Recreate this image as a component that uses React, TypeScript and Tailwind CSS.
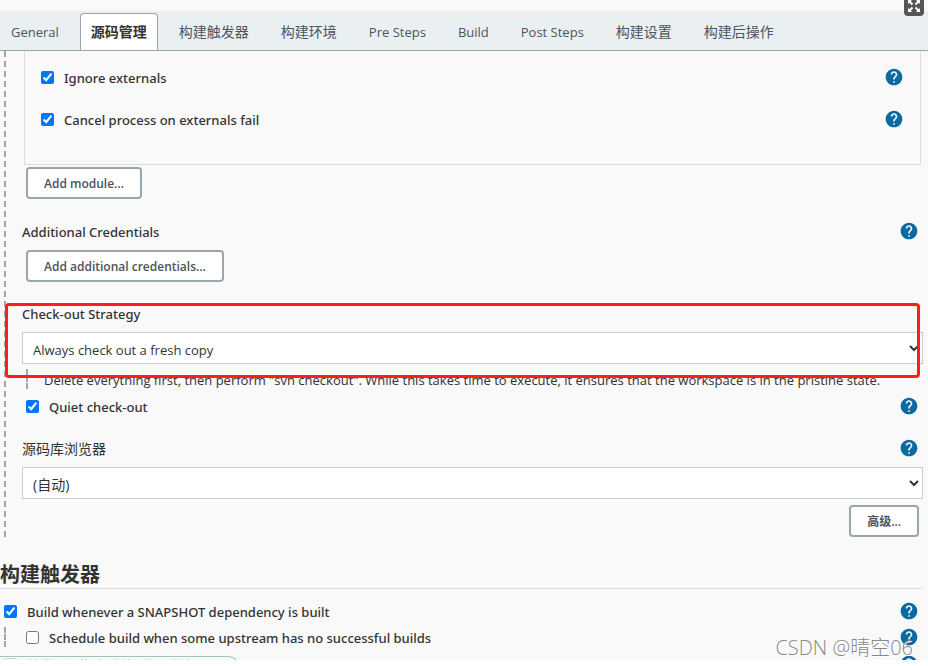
import React from 'react';
import { MdHelp } from 'react-icons/md';

const tabs = [
    { label: 'General', size: 'text-[13px]' },
    { label: '源码管理', size: 'text-[14px]' },
    { label: '构建触发器', size: 'text-[14px]' },
    { label: '构建环境', size: 'text-[14px]' },
    { label: 'Pre Steps', size: 'text-[13px]' },
    { label: 'Build', size: 'text-[13px]' },
    { label: 'Post Steps', size: 'text-[13px]' },
    { label: '构建设置', size: 'text-[14px]' },
    { label: '构建后操作', size: 'text-[14px]' },
];
const activeTab = '源码管理';

const labelFont = "font-['Noto_Sans','Noto_Sans_CJK_SC',sans-serif] font-medium";

function Help({ topic }: { topic: string }) {
    return (
        <a href="#help" aria-label={`Help: ${topic}`} className="shrink-0 text-[#0b6aa2]">
            <MdHelp size={20} />
        </a>
    );
}

function CheckRow({ id, label, checked = false, className = '' }: { id: string; label: string; checked?: boolean; className?: string }) {
    return (
        <div className={`flex h-5 items-center ${className}`}>
            <input id={id} type="checkbox" defaultChecked={checked} className="size-[13px] shrink-0" />
            <label htmlFor={id} className={`ml-[10px] grow pt-[2px] ${labelFont}`}>{label}</label>
            <Help topic={label} />
        </div>
    );
}

function Button({ children }: { children: React.ReactNode }) {
    return (
        <button type="button" className="h-8 rounded border-2 border-[#98a6ad] bg-white px-4 pt-[2px] text-[12px] font-semibold text-[#4d545d]">
            {children}
        </button>
    );
}

function Select({ id, options, size = 'text-[13px]' }: { id: string; options: string[]; size?: string }) {
    return (
        <select id={id} className={`block h-8 w-full border border-[#cccccc] bg-white pt-[3px] pl-[6px] text-[#333] ${size}`}>
            {options.map((o) => <option key={o}>{o}</option>)}
        </select>
    );
}

function ExpandButton() {
    return (
        <button type="button" aria-label="Fullscreen" className="absolute -top-1 right-1 size-5 rounded bg-[#555]">
            <svg viewBox="0 0 20 20" className="size-5" fill="#fff" stroke="#fff" strokeWidth="2">
                <path d="M5 5l3.5 3.5M15 5l-3.5 3.5M5 15l3.5-3.5M15 15l-3.5-3.5" />
                <path stroke="none" d="M4 4h4L4 8zM16 4h-4l4 4zM4 16h4l-4-4zM16 16h-4l4-4z" />
            </svg>
        </button>
    );
}

export default function App() {
    return (
        <div className="relative overflow-hidden bg-[#f9f9f9] font-['Open_Sans','Noto_Sans_CJK_SC',sans-serif] text-[13px] leading-5 text-[#333]">
            <nav className="mt-[11px] flex h-10 items-end gap-[10px] border-b border-[#98a6ad] bg-[#eaeff2] whitespace-nowrap text-[#4d545d]">
                {tabs.map((t) => (
                    <a
                        key={t.label}
                        href="#tab"
                        className={`flex h-[37px] items-center rounded-t border border-b-0 px-[10px] ${t.size} ${t.label === activeTab ? 'border-[#98a6ad] bg-white font-bold text-[#333]' : 'border-transparent'}`}
                    >
                        {t.label}
                    </a>
                ))}
            </nav>

            <section className="mt-[3px] ml-1 border-l-2 border-dashed border-[#a6a6a6] pl-4">
                <div className="mr-[7px] ml-[2px] -mt-[3px] border border-t-0 border-[#dddddd] pt-4 pr-4 pb-[35px] pl-4">
                    <CheckRow id="ignore" label="Ignore externals" checked />
                    <CheckRow id="cancel" label="Cancel process on externals fail" checked className="mt-[22px]" />
                </div>
                <div className="mt-[2px] ml-1 flex">
                    <Button>Add module...</Button>
                </div>

                <div className="mt-[22px] mr-[9px] flex h-5 justify-between">
                    <h3 className={`pt-px ${labelFont}`}>Additional Credentials</h3>
                    <Help topic="Additional Credentials" />
                </div>
                <div className="mt-[9px] ml-1 flex">
                    <Button>Add additional credentials...</Button>
                </div>

                <div className="relative mt-[22px] mr-[5px]">
                    <label htmlFor="strategy" className={`block ${labelFont}`}>Check-out Strategy</label>
                    <div className="mt-2">
                        <Select id="strategy" options={['Always check out a fresh copy', "Use 'svn update' as much as possible"]} />
                    </div>
                    {/* highlight frame around the strategy field */}
                    <div className="pointer-events-none absolute -top-px right-[3px] -bottom-[14px] -left-[17px] rounded border-[3px] border-[#ff1f13]" />
                </div>
                <p className="mt-[5px] mr-[5px] ml-1 h-5 border-l-2 border-dashed border-[#a6a6a6] pt-px pl-4 whitespace-nowrap">
                    Delete everything first, then perform "svn checkout". While this takes time to execute, it ensures that the workspace is in the pristine state.
                </p>

                <CheckRow id="quiet" label="Quiet check-out" checked className="mt-[7px] mr-[9px] ml-1" />

                <div className="mt-[22px] mr-[9px] flex h-5 justify-between">
                    <label htmlFor="browser" className="pt-px text-[14px]">源码库浏览器</label>
                    <Help topic="源码库浏览器" />
                </div>
                <div className="mt-[9px] mr-[5px]">
                    <Select id="browser" options={['(自动)']} size="text-[14px]" />
                </div>
                <div className="mt-[6px] mr-[9px] flex justify-end">
                    <Button>高级...</Button>
                </div>
            </section>

            <section className="mt-6">
                <h2 className="mr-[5px] border-b border-[#dddddd] text-[20px] leading-[27px] font-bold">构建触发器</h2>
                <CheckRow id="snapshot" label="Build whenever a SNAPSHOT dependency is built" checked className="mt-3 mr-[9px] ml-1" />
                <div className="mt-[6px] mr-[9px] ml-1 border-l-2 border-dashed border-[#a6a6a6] pl-5">
                    <CheckRow id="upstream" label="Schedule build when some upstream has no successful builds" />
                </div>
                <div className="relative h-[13px] overflow-hidden">
                    <CheckRow id="remote" label="触发远程构建 (例如,使用脚本)" className="mt-[7px] mr-[9px] ml-1" />
                    <div className="absolute top-[9px] left-0 h-6 w-60 rounded-tr-xl border border-l-0 border-[#9cc9b4] bg-[#f6f9ef]/70" />
                </div>
            </section>

            <ExpandButton />
            <span className="pointer-events-none absolute right-[15px] bottom-0 text-[20px] leading-6 font-light text-[#888] [text-shadow:1px_1px_0_#fff]">CSDN @晴空06</span>
        </div>
    );
}
